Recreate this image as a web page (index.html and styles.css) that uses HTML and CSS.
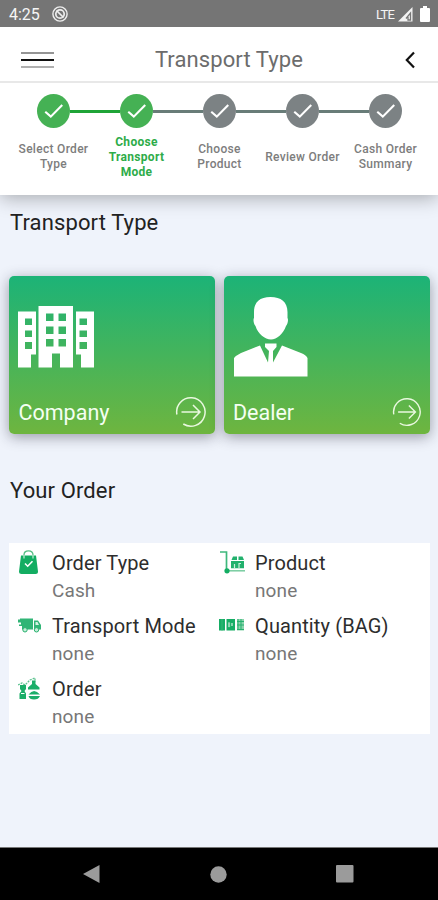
FILE: index.html
```html
<!DOCTYPE html>
<html lang="en">
<head>
<meta charset="utf-8">
<title>Transport Type</title>
<link rel="stylesheet" href="styles.css">
</head>
<body>
<svg class="defs" width="0" height="0" aria-hidden="true">
  <symbol id="check" viewBox="0 0 34 34"><path d="M8.500 17.800 L14.2 22.800 L26 10.800" fill="none" stroke="#fff" stroke-width="2.200"/></symbol>
  <symbol id="go" viewBox="0 0 32 32"><path d="M1.9 18.5 A14.2 14.2 0 1 1 8.3 28 M6.5 16 H24.5 M18 9 L25 16 L18 23" fill="none" stroke="#e9f8df" stroke-width="1.5"/></symbol>
</svg>
<div class="status">
  <span class="clock">4:25</span>
  <svg class="dnd" width="16" height="16" viewBox="0 0 16 16"><circle cx="8" cy="8" r="7.1" fill="none" stroke="#eee" stroke-width="1.4"/><circle cx="8" cy="8" r="4.2" fill="none" stroke="#eee" stroke-width="1.7"/><path d="M4.5 4.5 L11.5 11.5" stroke="#eee" stroke-width="1.7"/></svg>
  <span class="lte">LTE</span>
  <svg class="signal" width="15" height="15" viewBox="0 0 15 15"><path d="M0 14.5 L14.5 0 V14.5 Z" fill="#f2f2f2"/><path d="M8 11.5 L12.5 6 V13 H10 V10" fill="none" stroke="#777" stroke-width="1.3"/></svg>
  <svg class="battery" width="10" height="17" viewBox="0 0 10 17"><path d="M3 0h4v2h2q1 0 1 1v12q0 1-1 1H1q-1 0-1-1V3q0-1 1-1h2z" fill="#fff"/></svg>
</div>
<header class="bar">
  <div class="menu"><i></i><i></i><i></i></div>
  <h1>Transport Type</h1>
  <svg class="back" width="12" height="18" viewBox="0 0 12 18"><path d="M10 1.5 L2.8 9 L10 16.5" fill="none" stroke="#111" stroke-width="2.200"/></svg>
</header>
<nav class="steps">
  <div class="step done"><div class="dot"><svg><use href="#check"/></svg></div><span>Select Order<br>Type</span></div>
  <div class="step done active"><div class="dot"><svg><use href="#check"/></svg></div><span>Choose<br>Transport<br>Mode</span></div>
  <div class="step"><div class="dot"><svg><use href="#check"/></svg></div><span>Choose<br>Product</span></div>
  <div class="step"><div class="dot"><svg><use href="#check"/></svg></div><span>Review Order</span></div>
  <div class="step"><div class="dot"><svg><use href="#check"/></svg></div><span>Cash Order<br>Summary</span></div>
</nav>
<main>
  <h2 class="type-title">Transport Type</h2>
  <div class="cards">
    <div class="card company">
      <svg class="picture" width="76" height="62" viewBox="0 0 76 62"><path fill="#fff" fill-rule="evenodd" d="M0 5.5H18V48.5H13V61.5H0ZM7 12.5V19H14V12.5ZM7 24.5V31H14V24.5ZM7 36V43H14V36ZM20.500 0H55V61.500H42V47.500H34V61.500H20.500ZM28 7.500V15H35.500V7.500ZM40.500 7.500V15H48V7.500ZM28 20.500V28H35.500V20.500ZM40.500 20.500V28H48V20.500ZM28 33V40.500H35.500V33ZM40.500 33V40.500H48V33ZM58 5.500H76V61.500H63V48.500H58ZM61.500 12.500V19H69V12.500ZM61.500 24.500V31H69V24.500ZM61.500 36V43H69V36Z"/></svg>
      <div class="row"><span>Company</span><svg class="go"><use href="#go"/></svg></div>
    </div>
    <div class="card dealer">
      <svg class="picture" width="74" height="80" viewBox="0 0 74 80"><path fill="#fff" d="M20 15C20 5 26 0 36.500 0S53.500 5 53.500 15V21C54.500 22 54 27 52 29C49 37 43 42.500 37 42.500S24 37 21.500 29C19.500 27 19 22 20 21ZM0 79.500V61Q2 58.500 7 56L26 48.500L34 65.500L35 54L31 50V46.500H42.500V50L39 54V65.500L48 48.500L67 56Q72 58 73.500 61V79.500Z"/></svg>
      <div class="row"><span>Dealer</span><svg class="go"><use href="#go"/></svg></div>
    </div>
  </div>
  <h2 class="order-title">Your Order</h2>
  <section class="order">
    <div class="item"><svg width="24" height="26" viewBox="0 0 24 26"><path d="M6 8V5Q6 .8 10.500 .8T15 5V8" fill="none" stroke="#55bd83" stroke-width="1.300"/><path d="M3 5.500H18L20 21.500Q20 24 17.500 24H3.500Q1 24 1 21.500Z" fill="#13ad62"/><path d="M6 5V8.500M15 5V8.500" stroke="#c8efd9" stroke-width="1.200"/><path d="M7 13.500L9.700 16.200L14.500 11.300" stroke="#fff" stroke-width="1.600" fill="none"/></svg><p><b>Order Type</b><em>Cash</em></p></div>
    <div class="item"><svg width="28" height="26" viewBox="0 0 28 26"><path d="M1 2H7.500V19.500" fill="none" stroke="#3eb87c" stroke-width="1.700"/><path d="M9 20.800H26" stroke="#78cca0" stroke-width="1.500"/><circle cx="8" cy="20.800" r="2.600" fill="#13ad62"/><path d="M12 11H25V18.300H12ZM14 6.500H18V10H12.500ZM19.500 6.500H23.500L25 10H19.500Z" fill="#22b16d"/><path d="M15.500 18V14M20 18V13.500H22" stroke="#caefdb" stroke-width="1.200" fill="none"/></svg><p><b>Product</b><em>none</em></p></div>
    <div class="item"><svg width="24" height="26" viewBox="0 0 24 26"><path d="M2 5.500H15V16.500H4V13H1V11.500H3V9.500H0V6.500H2ZM16 7.500H20L23 12V16.500H16Z" fill="#31b576"/><path d="M17.500 9H19.500L21 12H17.500Z" fill="#d5f3e2"/><circle cx="7" cy="16.800" r="2.200" fill="#c5edd7" stroke="#27b16f"/><circle cx="18.500" cy="16.800" r="2.200" fill="#c5edd7" stroke="#27b16f"/></svg><p><b>Transport Mode</b><em>none</em></p></div>
    <div class="item"><svg width="28" height="26" viewBox="0 0 28 26"><path d="M0 6H6V17.500H0ZM7.500 6H16V17.500H7.500Z" fill="#16ad65"/><path d="M3 6V17.500M9 9.500H11V14H9" stroke="#35b779" fill="none"/><path d="M10 9.500V14M13 10V13" stroke="#d3f1df" stroke-width="1.200"/><path d="M18 6H25V17.500H18Z" fill="#8bd4ad"/><path d="M18 8.500H25M18 12H25M18 16.500H25M19 6V17M22 6V17" stroke="#27b16f" stroke-width="1"/></svg><p><b>Quantity (BAG)</b><em>none</em></p></div>
    <div class="item"><svg width="24" height="26" viewBox="0 0 24 26"><path d="M0 9L4 7L7 9L12 4L17 2V6" fill="none" stroke="#5dc390" stroke-width="1.300" stroke-dasharray="2 1"/><path d="M2 9H8V13L6.500 15L8 17.500V23H1.500V17.500L3.500 15L2 13ZM14 4.500H17.500V8L21.500 11.500V13.500H10V11.500L14 8ZM10.500 18.500Q16 11.500 22 18.500ZM10.500 20H22Q20.500 23.500 16 23.500T10.500 20Z" fill="#1bae69"/><path d="M3 17.500H6.500" stroke="#fff" stroke-width="1"/></svg><p><b>Order</b><em>none</em></p></div>
  </section>
</main>
<footer class="nav">
  <svg width="17" height="18" viewBox="0 0 17 18"><path d="M0 9L16.500 0V18Z" fill="#9b9b9b"/></svg>
  <svg width="17" height="17" viewBox="0 0 17 17"><circle cx="8.500" cy="8.500" r="8.200" fill="#9b9b9b"/></svg>
  <svg width="18" height="18" viewBox="0 0 18 18"><rect width="17.500" height="17.500" rx="1" fill="#9b9b9b"/></svg>
</footer>
</body>
</html>
```
FILE: styles.css
```css
* { box-sizing: border-box; }
body { margin: 0; width: 438px; height: 900px; display: flex; flex-direction: column; background: #eff3fb; font-family: Roboto, sans-serif; overflow: hidden; }
h1, h2, p { margin: 0; font-weight: 400; }
svg { display: block; flex: none; }
.defs { position: absolute; }

.status { height: 27px; flex: none; display: flex; align-items: center; background: #757575; color: #f5f5f5; padding: 1px 8px 0 9px; position: relative; z-index: 1; }
.clock { font-size: 16px; width: 43px; }
.lte { margin-left: auto; font-size: 13px; letter-spacing: -.8px; margin-right: 4px; }
.signal { margin-right: 7px; }

.bar { height: 56px; flex: none; display: flex; align-items: center; background: #fff; border-bottom: 2px solid #e8e8e8; padding: 11px 22px 0 21px; position: relative; z-index: 1; }
.menu { width: 33px; display: grid; gap: 5px; }
.menu i { height: 2px; background: #959595; }
.menu i:nth-child(2) { background: #111; }
.menu i:nth-child(3) { background: #b0b0b0; }
.bar h1 { flex: 1; text-align: center; font-size: 22px; letter-spacing: .1px; color: #6c6c6c; padding-left: 20px; }
.back { margin-left: 20px; }

.steps { height: 112px; flex: none; display: grid; grid-template-columns: repeat(5, 83px); padding: 11px 0 0 12px; background: #fff; position: relative; box-shadow: 0 3px 18px rgba(0, 0, 0, .3); }
.step { display: grid; grid-template-rows: 34px 58px; justify-items: center; position: relative; }
.dot { width: 33px; height: 34px; border-radius: 50%; background: #7c8284; }
.dot svg { width: 33px; height: 34px; }
.done .dot { background: #45b154; }
.step:not(:last-child)::after { content: ""; position: absolute; top: 15.500px; left: 58px; width: 50px; height: 3px; background: #687c78; }
.step.done:first-child::after { background: #1fa437; }
.step span { align-self: center; text-align: center; white-space: nowrap; font-size: 12px; font-weight: 500; line-height: 15px; letter-spacing: .3px; color: #7d7d7d; }
.step.active span { color: #2eac49; font-weight: 700; }

main { flex: 1; padding: 0 9px; }
h2 { font-size: 22px; line-height: 28px; letter-spacing: .12px; color: #222; padding-left: 1px; }
.type-title { padding-top: 14px; }
.cards { display: grid; grid-template-columns: 206px 206px; gap: 8.500px; margin-top: 38.500px; }
.card { height: 158.500px; border-radius: 5px; background: linear-gradient(#1cb377, #6eb53f); box-shadow: 0 3px 14px rgba(30, 30, 50, .42); padding: 0 8px 6px 9px; display: flex; flex-direction: column; justify-content: space-between; }
.company .picture { margin-top: 30.500px; }
.dealer .picture { margin-top: 21.500px; margin-left: 1px; }
.row { display: flex; align-items: center; justify-content: space-between; color: #f4fff2; font-size: 21.500px; letter-spacing: 0; }
.row span { padding-left: .5px; }
.go { width: 32px; height: 32px; }
.dealer .go { width: 30px; height: 30px; margin: 1px 0; }
.order-title { margin-top: 42.500px; }
.order { height: 191px; margin-top: 38.500px; margin-right: -1px; background: #fff; padding: 7px 0 0 9px; display: grid; grid-template-columns: 201px 1fr; grid-auto-rows: 63px; align-content: start; }
.item { display: flex; }
.item p { margin-left: 10px; }
.item:nth-child(even) p { margin-left: 8px; }
.item b, .item em { display: block; font-weight: 400; font-style: normal; font-size: 20px; line-height: 27px; letter-spacing: .12px; color: #2d2d2d; white-space: nowrap; }
.item em { color: #777; font-size: 19px; }

.nav { height: 53px; flex: none; display: flex; align-items: center; justify-content: space-between; background: #000; border-top: 1px solid #777; padding: 0 84px 0 83px; }
```
